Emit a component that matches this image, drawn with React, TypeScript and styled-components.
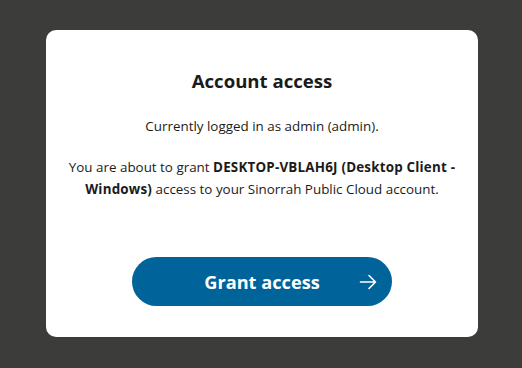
import React from "react";
import styled, { createGlobalStyle } from "styled-components";

const Global = createGlobalStyle`
  html, body { margin: 0; padding: 0; background: #3c3c3a; }
  body { font-family: "Open Sans", "Noto Sans", sans-serif; }
`;

const Page = styled.div`
  display: flex;
  justify-content: center;
  padding: 30px 0 0 2px;
  height: 368px;
  box-sizing: border-box;
`;

const Card = styled.div`
  width: 432px;
  height: 307px;
  box-sizing: border-box;
  background: #ffffff;
  border-radius: 10px;
  padding: 39px 16px 31px;
  display: flex;
  flex-direction: column;
  align-items: center;
  text-align: center;
  color: #1b1b1b;
`;

const Title = styled.h1`
  margin: 0;
  font-size: 18.6px;
  line-height: 24px;
  font-weight: 700;
`;

const Text = styled.p<{ $gap: number }>`
  margin: ${(p) => p.$gap}px 0 0;
  font-size: 13.4px;
  line-height: 22px;
  b { letter-spacing: 0.2px; }
`;

const Button = styled.button`
  margin-top: auto;
  width: 260px;
  height: 49px;
  border: none;
  border-radius: 25px;
  background: #00639a;
  color: #fff;
  font-family: inherit;
  font-size: 18.2px;
  font-weight: 700;
  display: flex;
  align-items: center;
  justify-content: center;
  position: relative;
`;

const Arrow = styled.span`
  position: absolute;
  right: 15px;
  top: 50%;
  transform: translateY(-50%);
  display: flex;
`;

export default function App() {
  return (
    <>
      <Global />
      <Page>
        <Card>
          <Title>Account access</Title>
          <Text $gap={22}>Currently logged in as admin (admin).</Text>
          <Text $gap={19}>
            You are about to grant <b>DESKTOP-VBLAH6J (Desktop Client - Windows)</b> access to your
            Sinorrah Public Cloud account.
          </Text>
          <Button>
            Grant access
            <Arrow>
              <svg width="18" height="18" viewBox="0 0 18 18" fill="none" stroke="#fff" strokeWidth="1.6" strokeLinecap="round" strokeLinejoin="round">
                <path d="M1.5 9h15M10 2.5l6.5 6.5-6.5 6.5" />
              </svg>
            </Arrow>
          </Button>
        </Card>
      </Page>
    </>
  );
}
